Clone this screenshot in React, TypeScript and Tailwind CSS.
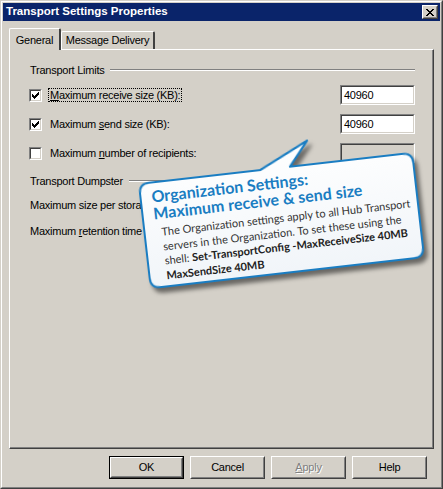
import type { ReactNode } from 'react';

const ui = { fontFamily: '"Liberation Sans", Arial, sans-serif' };
const callFont = { fontFamily: 'Lato, "Open Sans", sans-serif' };

function Check() {
  return (
    <svg width="7" height="7" viewBox="0 0 7 7" shapeRendering="crispEdges">
      <path d="M6 0h1v3h-1v1h-1v1h-1v1h-1v1h-1v-1h-1v-1h-1v-3h1v1h1v1h1v-1h1v-1h1z" fill="#000" />
    </svg>
  );
}

function CheckBox({ checked }: { checked?: boolean }) {
  return (
    <span className="flex w-[13px] h-[13px] shrink-0 border border-t-[#808080] border-l-[#808080] border-b-white border-r-white">
      <span className="flex flex-1 items-center justify-center bg-white border border-t-[#404040] border-l-[#404040] border-b-[#d4d0c8] border-r-[#d4d0c8]">
        {checked && <Check />}
      </span>
    </span>
  );
}

function TextBox({ value, disabled }: { value?: string; disabled?: boolean }) {
  return (
    <div className="w-[75px] h-[20px] shrink-0 border border-t-[#808080] border-l-[#808080] border-b-white border-r-white">
      <div
        className={
          'flex h-full items-center pl-[2px] border border-t-[#404040] border-l-[#404040] border-b-[#d4d0c8] border-r-[#d4d0c8] ' +
          (disabled ? 'bg-[#d4d0c8]' : 'bg-white')
        }
      >
        {value}
      </div>
    </div>
  );
}

function GroupHeader({ label }: { label: string }) {
  return (
    <div className="flex h-[14px] items-center gap-[6px] pl-[20px]">
      <span className="whitespace-nowrap">{label}</span>
      <div className="flex-1 h-[2px] border-t border-t-[#808080] border-b border-b-white" />
    </div>
  );
}

function CheckRow({
  checked,
  label,
  value,
  disabled,
  focused,
  className,
}: {
  checked?: boolean;
  label: ReactNode;
  value?: string;
  disabled?: boolean;
  focused?: boolean;
  className?: string;
}) {
  return (
    <div className={'flex h-[20px] items-center pl-[19px] ' + (className ?? '')}>
      <CheckBox checked={checked} />
      <span
        className={
          'ml-[6px] px-[1px] leading-[12px] whitespace-nowrap border border-dotted ' +
          (focused ? 'border-black' : 'border-transparent')
        }
      >
        {label}
      </span>
      <div className="flex-1" />
      <TextBox value={value} disabled={disabled} />
    </div>
  );
}

function PlainRow({ label, className }: { label: ReactNode; className?: string }) {
  return (
    <div className={'flex h-[20px] items-center pl-[20px] ' + (className ?? '')}>
      <span className="whitespace-nowrap">{label}</span>
      <div className="flex-1" />
      <TextBox />
    </div>
  );
}

function Button({ children, isDefault }: { children: ReactNode; isDefault?: boolean }) {
  return (
    <div className={'w-[75px] h-[23px] ' + (isDefault ? 'border border-black' : '')}>
      <div className="h-full border border-t-white border-l-white border-b-[#404040] border-r-[#404040]">
        <div className="flex h-full items-center justify-center border border-t-[#d4d0c8] border-l-[#d4d0c8] border-b-[#808080] border-r-[#808080]">
          {children}
        </div>
      </div>
    </div>
  );
}

function Callout() {
  return (
    <div
      className="absolute left-[144px] top-[168px] w-[275px] h-[105px] rotate-[-6.5deg] tracking-normal"
      style={callFont}
    >
      <svg
        className="absolute left-0 top-0 overflow-visible drop-shadow-[3px_5px_2px_rgba(0,0,0,0.5)]"
        width="275"
        height="105"
        viewBox="0 0 275 105"
      >
        <defs>
          <linearGradient id="bub" x1="0" y1="0" x2="0" y2="1">
            <stop offset="0" stopColor="#ffffff" />
            <stop offset="1" stopColor="#f1f5f9" />
          </linearGradient>
        </defs>
        <path
          d="M10 0 H122 L172 -24 L152 0 H265 Q275 0 275 10 V95 Q275 105 265 105 H10 Q0 105 0 95 V10 Q0 0 10 0 Z"
          fill="url(#bub)"
          stroke="#1a7dc2"
          strokeWidth="2"
          strokeLinejoin="round"
        />
      </svg>
      <div className="relative pt-[5px]">
        <div className="pl-[11px] text-[16px] leading-[17px] font-bold text-[#1a7dc2] whitespace-nowrap">
          Organization Settings:
          <br />
          Maximum receive &amp; send size
        </div>
        <div className="mt-[4px] pl-[17px] text-[11px] leading-[14.5px] text-[#333] whitespace-nowrap">
          The Organization settings apply to all Hub Transport
          <br />
          servers in the Organization. To set these using the
          <br />
          shell: <b className="text-[#222]">Set-TransportConfig -MaxReceiveSize 40MB</b>
          <br />
          <b className="text-[#222]">MaxSendSize 40MB</b>
        </div>
      </div>
    </div>
  );
}

export default function App() {
  return (
    <div
      className="relative w-[443px] h-[489px] text-[11px] tracking-[-0.25px] text-black select-none"
      style={ui}
    >
      {/* window frame */}
      <div className="h-full border border-t-[#d4d0c8] border-l-[#d4d0c8] border-b-[#404040] border-r-[#404040]">
        <div className="h-full border border-t-white border-l-white border-b-[#808080] border-r-[#808080] bg-[#d4d0c8] p-[1px] flex flex-col">
          {/* title bar */}
          <div className="flex h-[18px] items-center bg-[#0a246a] pl-[3px] pr-[2px]">
            <span className="text-white font-bold text-[11.5px] tracking-normal whitespace-nowrap">
              Transport Settings Properties
            </span>
            <div className="flex-1" />
            <div className="w-[16px] h-[14px] border border-t-white border-l-white border-b-[#404040] border-r-[#404040]">
              <div className="flex h-full items-center justify-center bg-[#d4d0c8] border border-t-[#d4d0c8] border-l-[#d4d0c8] border-b-[#808080] border-r-[#808080]">
                <svg width="8" height="7" viewBox="0 0 8 7" shapeRendering="crispEdges">
                  <path
                    d="M0 0h2v1h1v1h2v-1h1v-1h2v1h-1v1h-1v1h-1v1h1v1h1v1h1v1h-2v-1h-1v-1h-2v1h-1v1h-2v-1h1v-1h1v-1h1v-1h-1v-1h-1v-1h-1z"
                    fill="#000"
                  />
                </svg>
              </div>
            </div>
          </div>

          {/* tabs */}
          <div className="mt-[7px] ml-[6px] flex h-[21px] items-end">
            <div className="relative z-10 -mb-[1px] flex h-[22px] w-[52px] items-start justify-center pt-[3px] bg-[#d4d0c8] border-t border-l border-t-white border-l-white border-r-2 border-r-[#404040] rounded-tl-[2px] rounded-tr-[2px]">
              General
            </div>
            <div className="flex h-[18px] w-[94px] items-center justify-center border-t border-l border-t-white border-l-white border-r-2 border-r-[#404040] rounded-tl-[2px] rounded-tr-[2px]">
              Message Delivery
            </div>
          </div>

          {/* panel */}
          <div className="ml-[6px] w-[425px] h-[400px] border-t border-l border-t-white border-l-white border-r border-b border-r-[#404040] border-b-[#404040]">
            <div className="h-full border-r border-b border-r-[#808080] border-b-[#808080] pt-[13px] pr-[17px] flex flex-col">
              <GroupHeader label="Transport Limits" />
              <CheckRow
                className="mt-[8px]"
                checked
                focused
                label={
                  <>
                    <u>M</u>aximum receive size (KB):
                  </>
                }
                value="40960"
              />
              <CheckRow
                className="mt-[9px]"
                checked
                label={
                  <>
                    Maximum <u>s</u>end size (KB):
                  </>
                }
                value="40960"
              />
              <CheckRow
                className="mt-[9px]"
                disabled
                label={
                  <>
                    Maximum <u>n</u>umber of recipients:
                  </>
                }
              />
              <div className="mt-[11px]">
                <GroupHeader label="Transport Dumpster" />
              </div>
              <PlainRow className="mt-[7px]" label="Maximum size per storage group (MB):" />
              <PlainRow
                className="mt-[6px]"
                label={
                  <>
                    Maximum <u>r</u>etention time (days):
                  </>
                }
              />
            </div>
          </div>

          {/* buttons */}
          <div className="mt-[7px] ml-[106px] flex gap-[6px]">
            <Button isDefault>OK</Button>
            <Button>Cancel</Button>
            <Button>
              <span className="text-[#808080] [text-shadow:1px_1px_0_#fff]">
                <u>A</u>pply
              </span>
            </Button>
            <Button>Help</Button>
          </div>
        </div>
      </div>

      <Callout />
    </div>
  );
}
